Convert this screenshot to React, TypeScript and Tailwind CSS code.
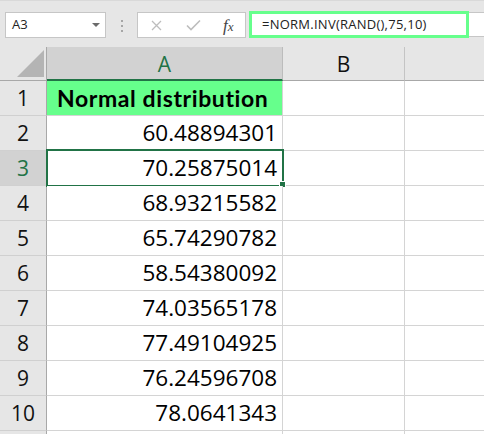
import React from 'react';

const values = [
  '60.48894301',
  '70.25875014',
  '68.93215582',
  '65.74290782',
  '58.54380092',
  '74.03565178',
  '77.49104925',
  '76.24596708',
  '78.0641343',
];

const font = { fontFamily: '"Open Sans", "Liberation Sans", sans-serif' };

function TopBar() {
  return (
    <div className="flex h-[47px] items-start border-t border-[#d9d9d9] bg-[#e6e6e6] pt-[10px]">
      {/* name box */}
      <div className="ml-[5px] mt-px flex h-[26px] w-[101px] items-center justify-between border border-[#c6c6c6] bg-white pl-[6px] pr-[5px]">
        <span className="text-[13px] text-[#222]">A3</span>
        <svg width="8" height="4" viewBox="0 0 8 4">
          <path d="M0 0 L8 0 L4 4 Z" fill="#6b6b6b" />
        </svg>
      </div>

      {/* splitter dots */}
      <div className="mt-[9px] flex w-[31px] flex-col items-center gap-[3px]">
        <span className="h-[2px] w-[2px] bg-[#a6a6a6]" />
        <span className="h-[2px] w-[2px] bg-[#a6a6a6]" />
        <span className="h-[2px] w-[2px] bg-[#a6a6a6]" />
      </div>

      {/* cancel / enter / fx */}
      <div className="mt-px flex h-[26px] w-[109px] items-center border border-[#c6c6c6] bg-white">
        <svg className="ml-[13px]" width="11" height="11" viewBox="0 0 11 11">
          <path d="M1 1 L10 10 M10 1 L1 10" stroke="#bdbdbd" strokeWidth="1.3" />
        </svg>
        <svg className="ml-[24px]" width="15" height="12" viewBox="0 0 15 12">
          <path d="M1 6.5 L5 10.5 L14 1.5" stroke="#bdbdbd" strokeWidth="1.6" fill="none" />
        </svg>
        <span
          className="ml-[22px] text-[17px] italic leading-none text-[#444]"
          style={{ fontFamily: '"Liberation Serif", serif' }}
        >
          f<span className="text-[13px]">x</span>
        </span>
      </div>

      {/* formula bar */}
      <div className="ml-[3px] flex h-[27px] flex-1 items-stretch">
        <div className="flex w-[220px] items-center border-[3px] border-[#66ff8c] bg-white pl-[10px]">
          <span className="text-[13px] tracking-[0.25px] text-[#222]">=NORM.INV(RAND(),75,10)</span>
        </div>
        <div className="mt-px h-[25px] flex-1 border-y border-[#c6c6c6] bg-white" />
      </div>
    </div>
  );
}

function ColumnHeaders() {
  return (
    <div className="grid h-[34px] grid-cols-[47px_236px_122px_1fr]">
      <div className="relative border-b border-r border-[#a8a8a8] bg-[#e6e6e6]">
        <svg className="absolute bottom-[3px] right-[2px]" width="27" height="27" viewBox="0 0 27 27">
          <path d="M27 0 L27 27 L0 27 Z" fill="#b4b4b4" />
        </svg>
      </div>
      <div className="flex items-center justify-center border-b-2 border-r border-b-[#217346] border-r-[#bcbcbc] bg-[#d2d2d2] pt-[2px]">
        <span className="text-[21px] leading-none text-[#217346]">A</span>
      </div>
      <div className="flex items-center justify-center border-b border-r border-b-[#a8a8a8] border-r-[#c4c4c4] bg-[#e6e6e6] pt-[2px]">
        <span className="text-[21px] leading-none text-[#111]">B</span>
      </div>
      <div className="border-b border-[#a8a8a8] bg-[#e6e6e6]" />
    </div>
  );
}

function Row({ n, children, selected, first }: { n?: number; children?: React.ReactNode; selected?: boolean; first?: boolean }) {
  return (
    <div className="grid h-[35px] grid-cols-[47px_236px_122px_1fr]">
      <div
        className={
          'flex items-center justify-center border-b border-r border-b-[#d0d0d0] border-r-[#a8a8a8] ' +
          (selected ? 'bg-[#d2d2d2] text-[#217346]' : 'bg-[#e6e6e6] text-[#111]')
        }
      >
        {n && <span className="text-[21px] leading-none">{n}</span>}
      </div>
      <div
        className={
          'relative flex items-center border-b border-r border-[#d4d4d4] ' +
          (first ? 'bg-[#66ff8c] pl-[10px]' : 'justify-end bg-white pr-[5px]')
        }
      >
        {children}
        {selected && (
          <>
            <div className="pointer-events-none absolute -left-px -right-[2px] -top-[2px] bottom-[-2px] border-2 border-[#217346]" />
            <div className="absolute -bottom-[3px] -right-[4px] h-[7px] w-[7px] border border-white bg-[#217346]" />
          </>
        )}
      </div>
      <div className="border-b border-r border-[#d4d4d4] bg-white" />
      <div className="border-b border-[#d4d4d4] bg-white" />
    </div>
  );
}

export default function App() {
  return (
    <div className="h-[434px] w-[484px] overflow-hidden bg-white" style={font}>
      <TopBar />
      <ColumnHeaders />
      <Row n={1} first>
        <span
          className="whitespace-nowrap text-[23px] font-bold leading-none tracking-[0.6px] text-black"
          style={{ fontFamily: 'Lato, "Open Sans", sans-serif' }}
        >
          Normal distribution
        </span>
      </Row>
      {values.map((v, i) => (
        <Row key={v} n={i + 2} selected={i === 1}>
          <span className="text-[22.5px] leading-none text-black">{v}</span>
        </Row>
      ))}
      <Row />
    </div>
  );
}
